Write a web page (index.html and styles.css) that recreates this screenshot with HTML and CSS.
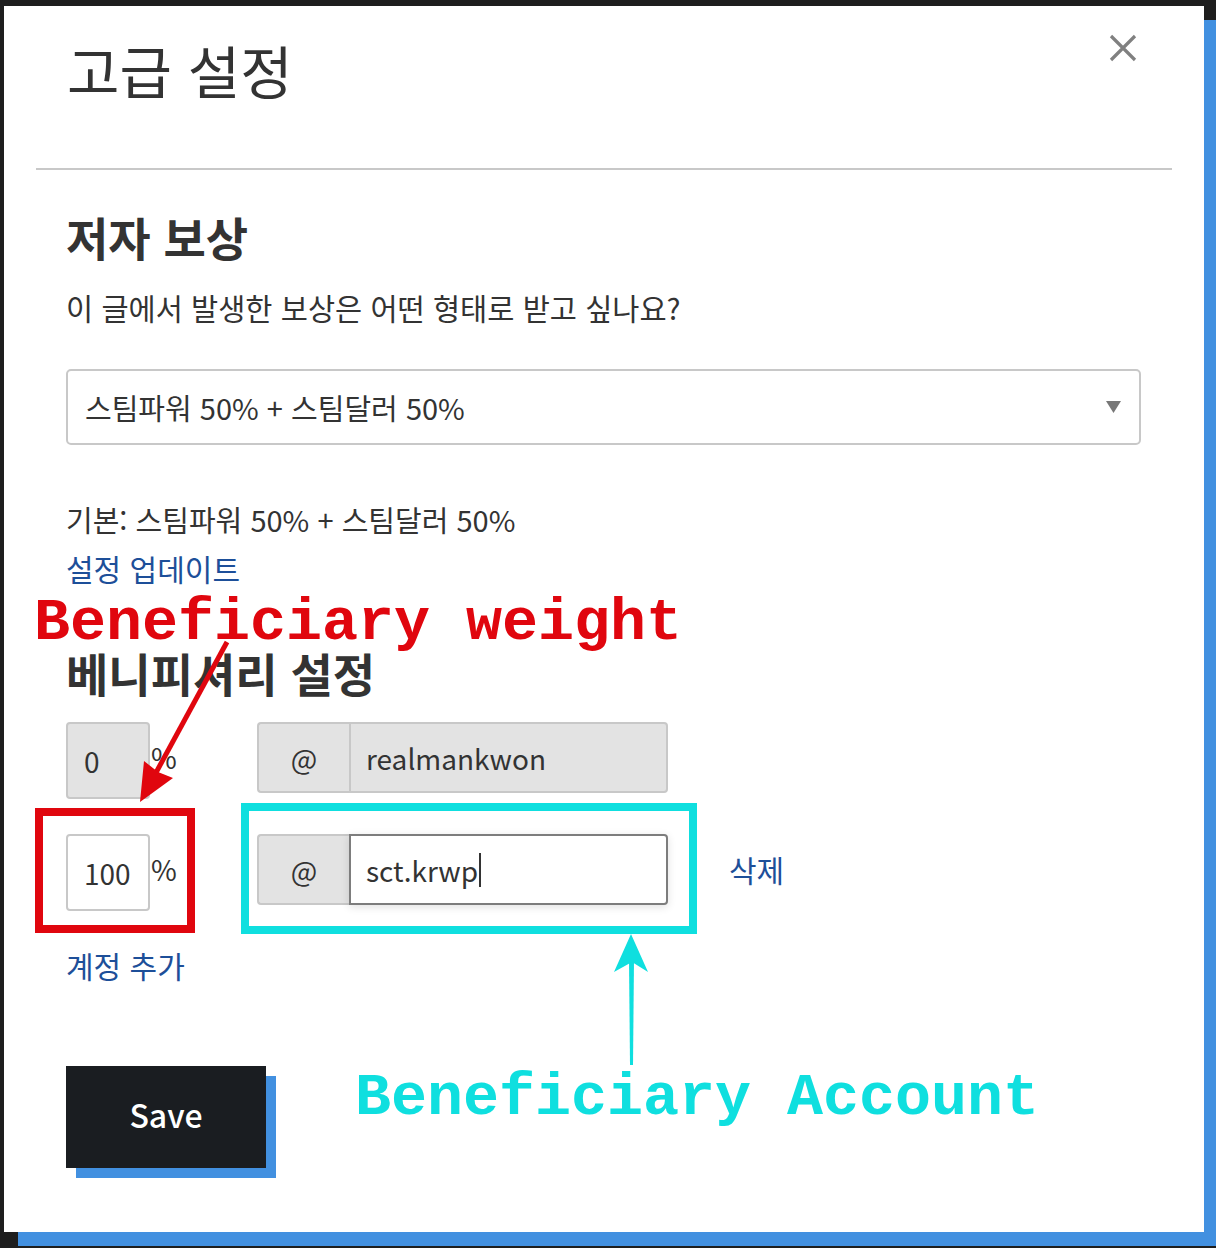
FILE: index.html
```html
<!DOCTYPE html>
<html lang="ko">
<head>
    <meta charset="UTF-8">
    <title>고급 설정</title>
    <link rel="stylesheet" href="styles.css">
</head>
<body>
    <div class="modal">
        <div class="modal-header">
            <h2 class="modal-title">고급 설정</h2>
            <button class="close" type="button" aria-label="닫기">
                <svg width="28" height="28" viewBox="0 0 28 28">
                    <path d="M2 2 L26 26 M26 2 L2 26" stroke="#808080" stroke-width="3.2" fill="none"/>
                </svg>
            </button>
        </div>
        <hr class="divider">

        <div class="modal-body">
            <h3 class="section-title">저자 보상</h3>
            <p class="text question">이 글에서 발생한 보상은 어떤 형태로 받고 싶나요?</p>

            <div class="select">
                <span>스팀파워 50% + 스팀달러 50%</span>
                <svg width="15" height="12" viewBox="0 0 15 12"><path d="M0 0 H15 L7.5 12 Z" fill="#777"/></svg>
            </div>

            <p class="text default">기본: 스팀파워 50% + 스팀달러 50%</p>
            <a href="#" class="link">설정 업데이트</a>

            <h3 class="section-title bene-title">베니피셔리 설정</h3>

            <div class="bene-row">
                <div class="weight">
                    <div class="field disabled">0</div>
                    <span class="pct">%</span>
                </div>
                <div class="account">
                    <span class="at">@</span>
                    <div class="field disabled">realmankwon</div>
                </div>
            </div>

            <div class="bene-row second">
                <div class="weight">
                    <div class="field">100</div>
                    <span class="pct">%</span>
                </div>
                <div class="account">
                    <span class="at">@</span>
                    <div class="field focus">sct.krwp<span class="caret"></span></div>
                </div>
                <a href="#" class="link remove">삭제</a>
            </div>

            <a href="#" class="link add">계정 추가</a>

            <button class="save" type="button">Save</button>
        </div>
    </div>

    <!-- annotation overlay -->
    <svg class="notes" width="1216" height="1248" viewBox="0 0 1216 1248">
        <rect x="39" y="812" width="152" height="117" fill="none" stroke="#e0060e" stroke-width="8"/>
        <rect x="245" y="807" width="448" height="123" fill="none" stroke="#0fdfdf" stroke-width="8"/>
        <line x1="227" y1="642" x2="152" y2="780" stroke="#e0060e" stroke-width="5"/>
        <polygon points="140,802 144,761 158,772 173,778" fill="#e0060e"/>
        <polygon points="630,1065 633,1065 634,960 629,960" fill="#0fdfdf"/>
        <polygon points="631,934 648,972 632,962 614,972" fill="#0fdfdf"/>
        <text x="34" y="639" class="note red">Beneficiary weight</text>
        <text x="355" y="1114" class="note cyan">Beneficiary Account</text>
    </svg>
</body>
</html>
```

FILE: styles.css
```css
body {
    margin: 0;
    width: 1216px;
    height: 1248px;
    background: #1e1e1e;
    position: relative;
    overflow: hidden;
    font-family: "Noto Sans CJK KR", "Noto Sans", sans-serif;
    color: #333;
}
.modal {
    margin: 6px 0 0 4px;
    width: 1200px;
    height: 1226px;
    background: #fff;
    box-shadow: 14px 14px 0 #4290e0;
}
.modal-header {
    display: flex;
    justify-content: space-between;
    align-items: flex-start;
    height: 162px;
    box-sizing: border-box;
    padding: 28px 67px 0 63px;
}
.modal-title {
    margin: 7px 0 0;
    font-size: 57px;
    font-weight: 400;
    line-height: 1;
    color: #333;
}
.close {
    border: none;
    background: none;
    padding: 0;
    width: 28px;
    height: 28px;
    cursor: pointer;
}
.close svg {
    display: block;
}
.divider {
    margin: 0 32px;
    border: none;
    border-top: 2px solid #c8c8c8;
}
.modal-body {
    padding: 0 63px 0 62px;
}
.section-title {
    margin: 43px 0 0;
    font-size: 46px;
    font-weight: 700;
    line-height: 1;
    color: #333;
}
.text {
    margin: 0;
    font-size: 29px;
    line-height: 42px;
}
.question {
    margin-top: 27px;
    font-size: 29.5px;
}
.select {
    margin-top: 41px;
    height: 76px;
    box-sizing: border-box;
    border: 2px solid #c8c8c8;
    border-radius: 5px;
    display: flex;
    align-items: center;
    justify-content: space-between;
    padding: 0 18px 0 17px;
    font-size: 29px;
}
.default {
    margin-top: 53px;
}
.link {
    display: block;
    width: max-content;
    margin-top: 7px;
    font-size: 30px;
    line-height: 42px;
    color: #1d4f99;
    text-decoration: none;
}
.bene-title {
    margin-top: 60px;
}
.bene-row {
    display: flex;
    align-items: flex-start;
    margin-top: 27px;
}
.bene-row.second {
    margin-top: 35px;
}
.weight {
    display: flex;
    width: 191px;
}
.weight .field {
    width: 84px;
    height: 77px;
    padding-left: 16px;
}
.pct {
    font-size: 28px;
    line-height: 1;
    padding-top: 21px;
    padding-left: 1px;
}
.field {
    box-sizing: border-box;
    border: 2px solid #c8c8c8;
    border-radius: 4px;
    background: #fff;
    display: flex;
    align-items: center;
    font-size: 28px;
}
.field.disabled {
    background: #e3e3e3;
}
.account {
    display: flex;
    width: 411px;
    height: 71px;
}
.at {
    width: 92px;
    box-sizing: border-box;
    border: 2px solid #c8c8c8;
    border-right: none;
    border-radius: 4px 0 0 4px;
    background: #e3e3e3;
    display: flex;
    align-items: center;
    justify-content: center;
    font-size: 28px;
}
.account .field {
    flex: 1;
    border-radius: 0 4px 4px 0;
    padding-left: 15px;
}
.account .field.focus {
    border-color: #7d7d7d;
    box-shadow: 0 2px 8px rgba(0, 0, 0, 0.12);
}
.caret {
    display: inline-block;
    width: 2px;
    height: 34px;
    background: #333;
    margin-left: 1px;
}
.remove {
    margin: 14px 0 0 61px;
}
.add {
    margin-top: 33px;
}
.save {
    display: block;
    margin-top: 80px;
    width: 200px;
    height: 102px;
    padding-bottom: 8px;
    border: none;
    background: #1a1d21;
    color: #fff;
    font-family: "Noto Sans CJK KR", "Noto Sans", sans-serif;
    font-size: 32px;
    font-weight: 500;
    box-shadow: 10px 10px 0 #4290e0;
    cursor: pointer;
}
.notes {
    position: absolute;
    top: 0;
    left: 0;
    pointer-events: none;
}
.note {
    font-family: "Liberation Mono", "Courier New", monospace;
    font-weight: 700;
    font-size: 60px;
}
.note.red {
    fill: #e0060e;
}
.note.cyan {
    fill: #0fdfdf;
}
```
